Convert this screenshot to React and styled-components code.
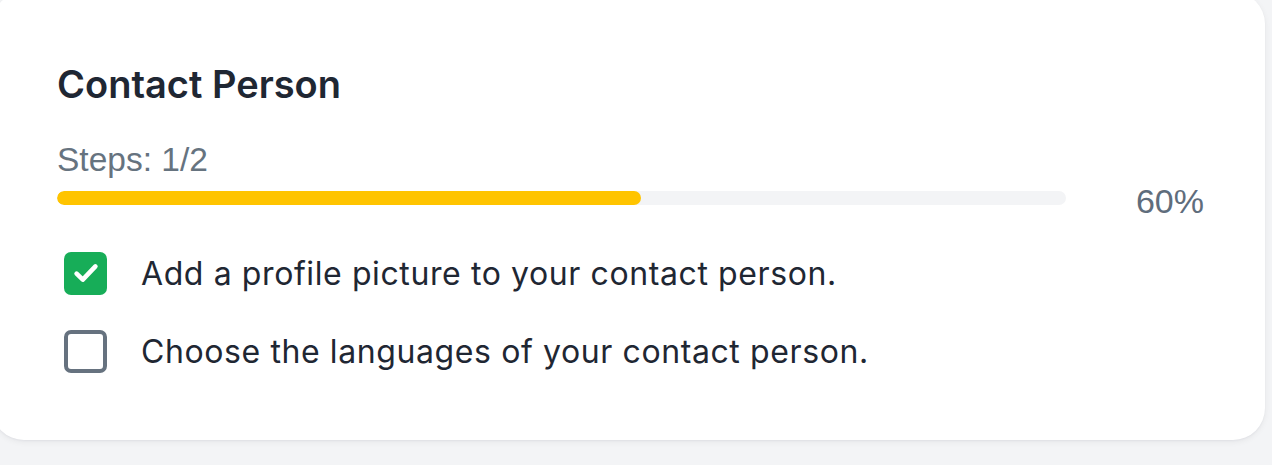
import React from "react";
import styled, { createGlobalStyle } from "styled-components";

const Global = createGlobalStyle`
  html, body { margin: 0; padding: 0; background: #f3f4f6; }
  body { width: 1272px; height: 465px; overflow: hidden; }
`;

const Page = styled.div`
  width: 1272px;
  height: 465px;
  background: #f3f4f6;
  overflow: hidden;
`;

const Card = styled.section`
  box-sizing: border-box;
  width: 1273px;
  height: 448px;
  margin: -8px 0 0 -8px;
  background: #ffffff;
  border-radius: 32px;
  box-shadow: 0 2px 6px rgba(15, 23, 42, 0.06), 0 1px 2px rgba(15, 23, 42, 0.04);
  padding: 68.8px 61px 0 65px;
  display: flex;
  flex-direction: column;
`;

const Title = styled.h2`
  margin: 0;
  font-family: Inter, "Noto Sans", sans-serif;
  font-weight: 560;
  font-size: 38px;
  line-height: 46px;
  color: #1f2733;
  letter-spacing: 0;
`;

const Steps = styled.div`
  margin-top: 36px;
  font-family: "Liberation Sans", Arial, sans-serif;
  font-size: 33.5px;
  line-height: 34px;
  color: #66737f;
`;

const ProgressRow = styled.div`
  display: flex;
  align-items: center;
  gap: 70px;
`;

const Track = styled.div`
  flex: 1;
  height: 14px;
  border-radius: 7px;
  background: #f3f4f6;
  overflow: hidden;
`;

const Fill = styled.div`
  height: 100%;
  border-radius: 7px;
  background: #ffc400;
`;

const Percent = styled.span`
  margin-top: 6px;
  font-family: "Liberation Sans", Arial, sans-serif;
  font-size: 34px;
  line-height: 36px;
  color: #5f6d7c;
`;

const List = styled.ul`
  list-style: none;
  margin: 33px 0 0;
  padding: 0;
  display: flex;
  flex-direction: column;
  gap: 35px;
`;

const Item = styled.li`
  display: flex;
  align-items: center;
  gap: 34px;
  padding-left: 7px;
`;

const Box = styled.span`
  box-sizing: border-box;
  flex: none;
  width: 43px;
  height: 43px;
  border-radius: 7px;
  display: flex;
  align-items: center;
  justify-content: center;
  background: ${(p) => (p.$checked ? "#17ad58" : "#ffffff")};
  border: ${(p) => (p.$checked ? "none" : "4px solid #66727f")};
`;

const Label = styled.span`
  font-family: Inter, "Noto Sans", sans-serif;
  font-size: 32px;
  line-height: 43px;
  letter-spacing: 0.6px;
  color: #1f2733;
`;

const Check = () => (
  <svg width="26" height="24" viewBox="0 0 26 24" fill="none">
    <path d="M3.6 12.6L9.8 18.6L22.4 5.4" stroke="#fff" strokeWidth="4.6" strokeLinecap="round" strokeLinejoin="round" />
  </svg>
);

const items = [
  { text: "Add a profile picture to your contact person.", done: true },
  { text: "Choose the languages of your contact person.", done: false },
];

export default function App() {
  const pct = 57.9;
  return (
    <Page>
      <Global />
      <Card>
        <Title>Contact Person</Title>
        <Steps>Steps: 1/2</Steps>
        <ProgressRow>
          <Track>
            <Fill style={{ width: `${pct}%` }} />
          </Track>
          <Percent>60%</Percent>
        </ProgressRow>
        <List>
          {items.map((it) => (
            <Item key={it.text}>
              <Box $checked={it.done}>{it.done && <Check />}</Box>
              <Label>{it.text}</Label>
            </Item>
          ))}
        </List>
      </Card>
    </Page>
  );
}
